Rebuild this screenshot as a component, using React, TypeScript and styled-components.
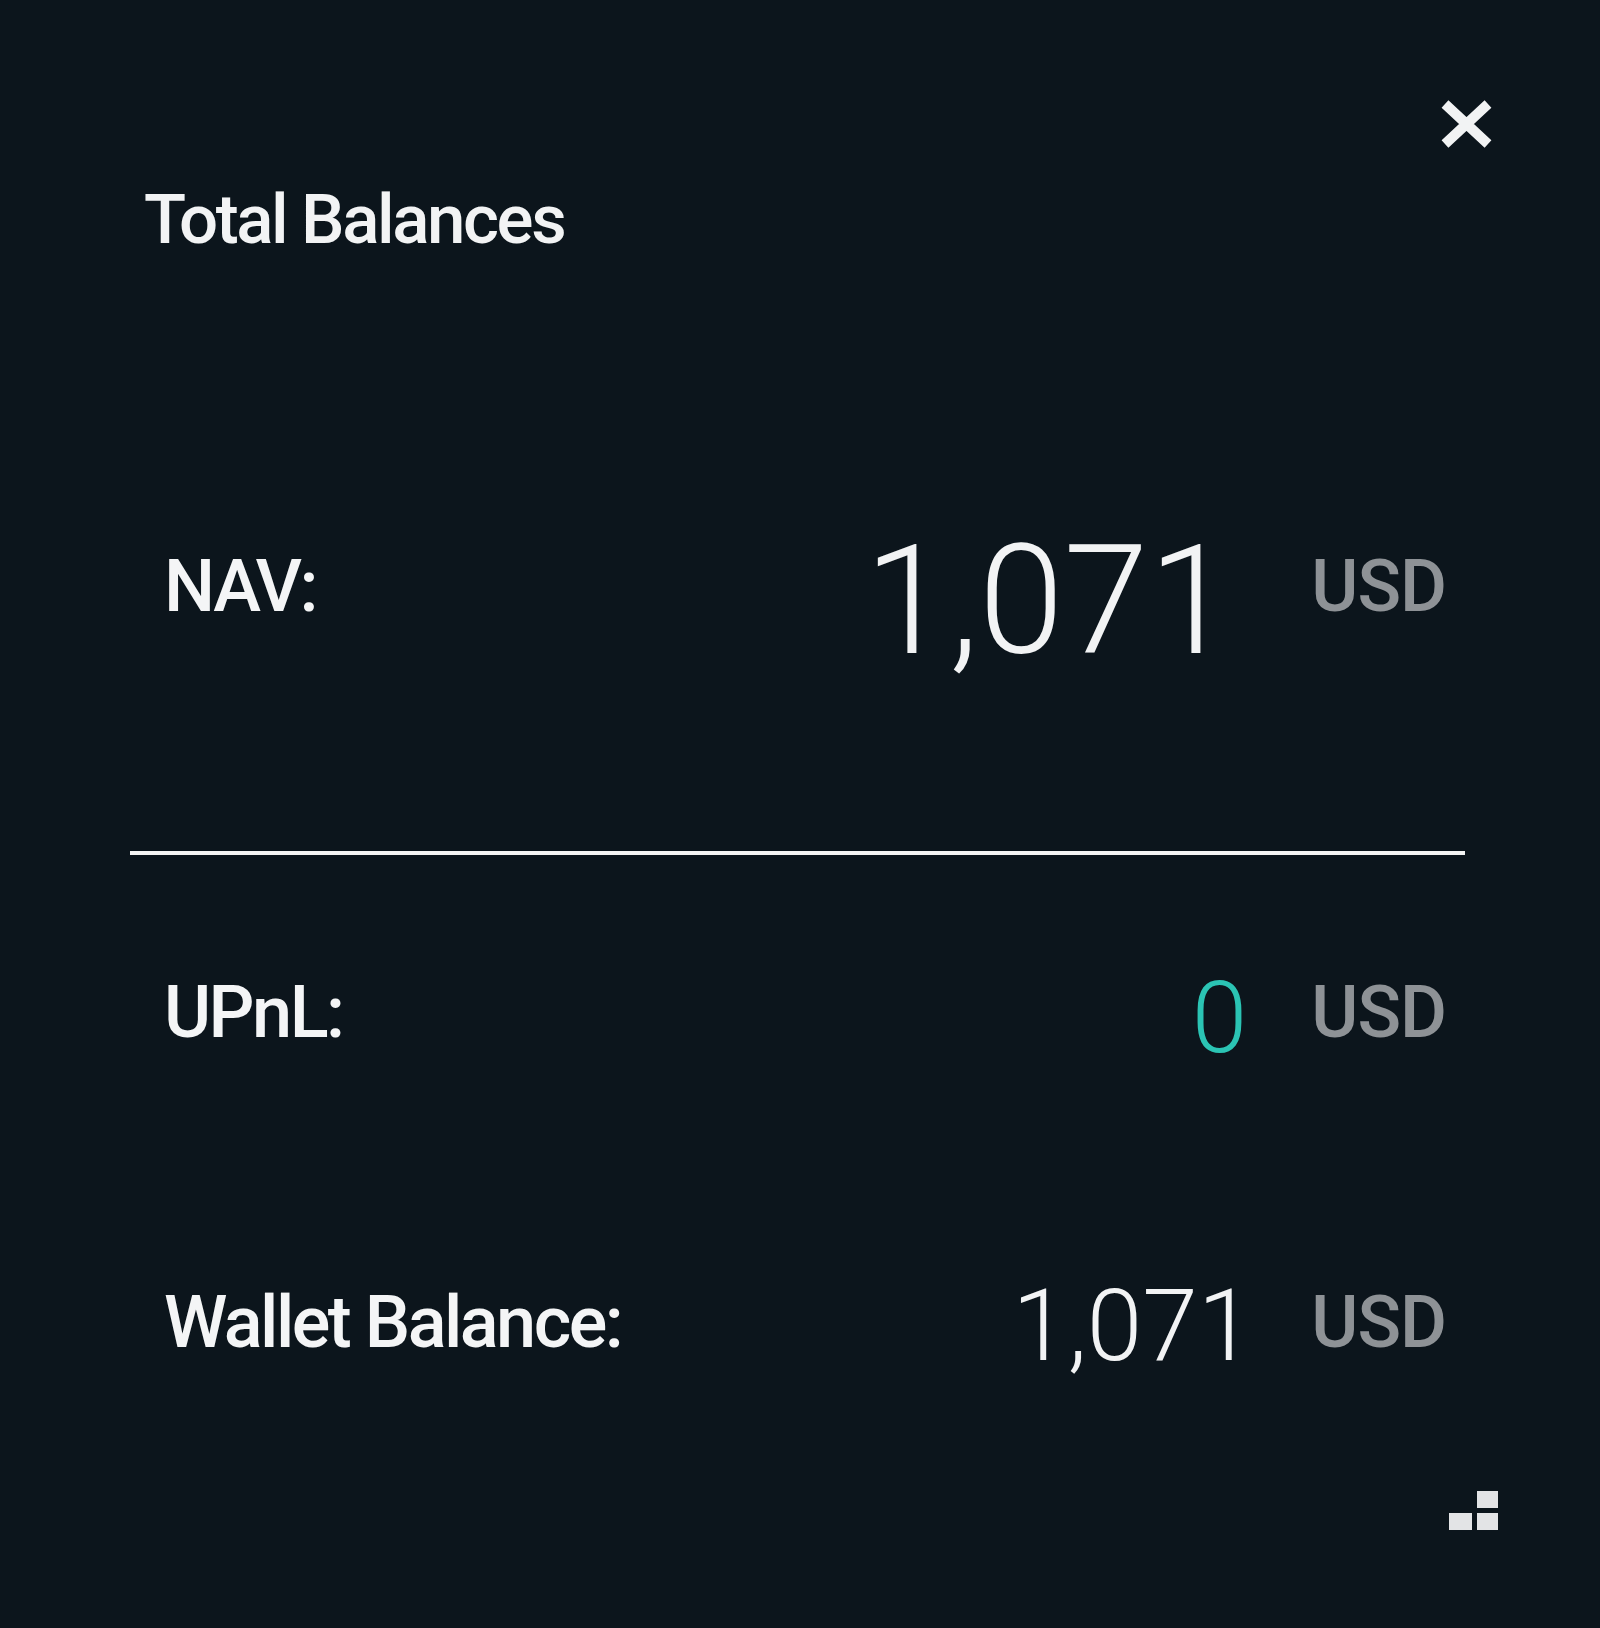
import styled, { createGlobalStyle } from "styled-components";

const GlobalStyle = createGlobalStyle`
  html, body {
    margin: 0;
    padding: 0;
    background: #0c151c;
  }
  body {
    font-family: Roboto, "Liberation Sans", sans-serif;
    color: #f2f3f4;
  }
`;

const Panel = styled.div`
  width: 1600px;
  height: 1628px;
  background: #0c151c;
  box-sizing: border-box;
  padding: 99px 107px 0 130px;
  display: flex;
  flex-direction: column;
`;

const TopBar = styled.div`
  display: flex;
  justify-content: flex-end;
  height: 50px;
`;

const CloseButton = styled.button`
  width: 53px;
  height: 50px;
  padding: 0;
  border: none;
  background: transparent;
  cursor: pointer;
  display: flex;
`;

const Title = styled.h1`
  margin: 36px 0 0 14px;
  font-size: 69px;
  line-height: 1;
  font-weight: 500;
  letter-spacing: -2.4px;
  color: #f2f3f4;
`;

const Body = styled.div`
  width: 1335px;
  display: flex;
  flex-direction: column;
`;

const Row = styled.div<{ $top: number }>`
  height: 200px;
  margin-top: ${(p) => p.$top}px;
  display: flex;
  align-items: center;
  padding: 0 19px 0 34px;
`;

const Label = styled.span`
  flex: 1;
  font-size: 72px;
  font-weight: 500;
  letter-spacing: -2.5px;
  color: #f4f5f6;
`;

const Value = styled.span<{ $size: number; $color?: string; $gap: number; $drop: number }>`
  font-size: ${(p) => p.$size}px;
  font-weight: 300;
  line-height: 1;
  color: ${(p) => p.$color ?? "#f2f3f4"};
  margin-right: ${(p) => p.$gap}px;
  padding-top: ${(p) => p.$drop * 2}px;
`;

const Unit = styled.span`
  font-size: 72px;
  font-weight: 500;
  letter-spacing: -1px;
  color: #8e9296;
`;

const Divider = styled.hr<{ $top: number }>`
  margin: ${(p) => p.$top}px 0 0;
  border: none;
  height: 4px;
  background: #f4f4f4;
`;

const Footer = styled.div`
  display: flex;
  justify-content: flex-end;
  margin: 69px -5px 0 0;
`;

const Grip = styled.div`
  display: grid;
  grid-template-columns: 23px 21px;
  grid-template-rows: 17px 17px;
  column-gap: 5px;
  row-gap: 5px;
`;

const GripDot = styled.span<{ $hidden?: boolean }>`
  background: ${(p) => (p.$hidden ? "transparent" : "#e3e4e6")};
`;

function CloseIcon() {
  return (
    <svg width="53" height="50" viewBox="0 0 53 50">
      <path d="M5 5 L48 45 M48 5 L5 45" stroke="#f2f3f4" strokeWidth="10" />
    </svg>
  );
}

export default function App() {
  return (
    <>
      <GlobalStyle />
      <Panel>
        <TopBar>
          <CloseButton aria-label="close">
            <CloseIcon />
          </CloseButton>
        </TopBar>
        <Body>
          <Title>Total Balances</Title>
          <Row $top={232}>
            <Label>NAV:</Label>
            <Value $size={153} $gap={78} $drop={14}>
              1,071
            </Value>
            <Unit>USD</Unit>
          </Row>
          <Divider $top={165} />
          <Row $top={57}>
            <Label>UPnL:</Label>
            <Value $size={100} $color="#2bc4b4" $gap={64} $drop={6}>
              0
            </Value>
            <Unit>USD</Unit>
          </Row>
          <Row $top={110}>
            <Label>Wallet Balance:</Label>
            <Value $size={100} $gap={58} $drop={4}>
              1,071
            </Value>
            <Unit>USD</Unit>
          </Row>
        </Body>
        <Footer>
          <Grip>
            <GripDot $hidden />
            <GripDot />
            <GripDot />
            <GripDot />
          </Grip>
        </Footer>
      </Panel>
    </>
  );
}
